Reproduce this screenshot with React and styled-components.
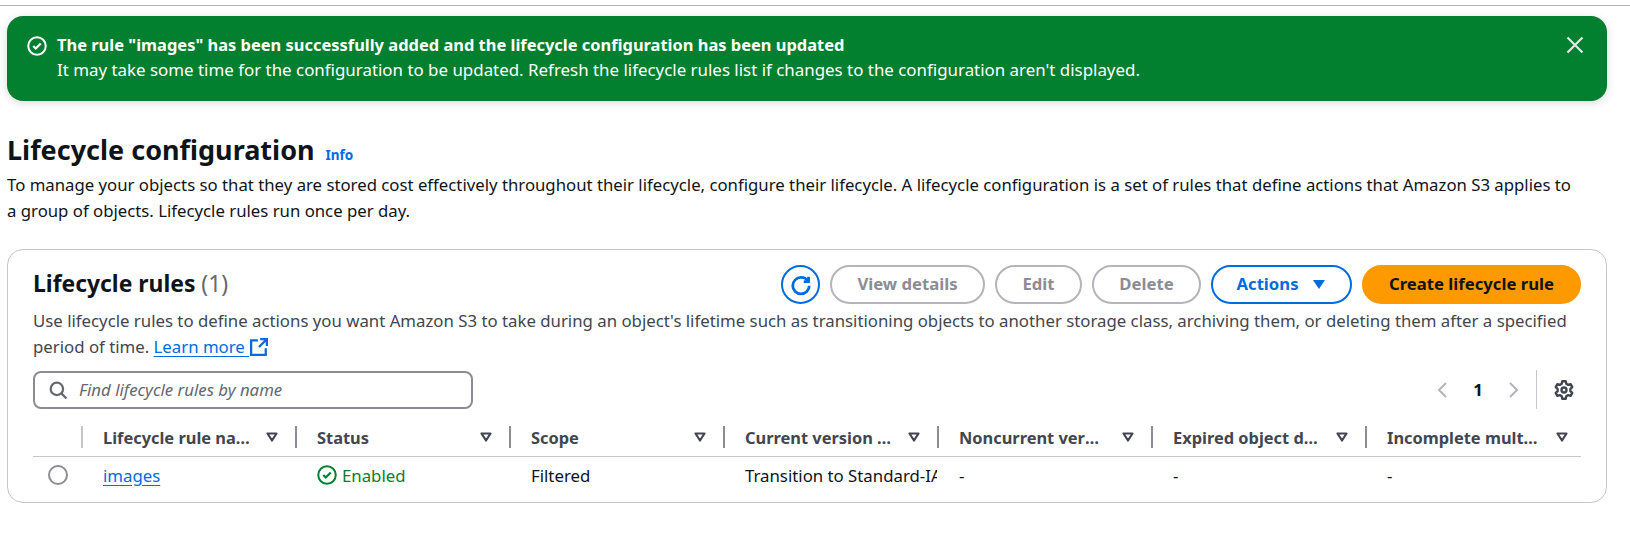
import styled, { createGlobalStyle } from "styled-components";

const GlobalStyle = createGlobalStyle`
  html, body {
    margin: 0;
    background: #fff;
    font-family: "Noto Sans", "Open Sans", sans-serif;
    color: #0f141a;
    font-size: 16.8px;
  }
`;

const columns = [
  "Lifecycle rule name",
  "Status",
  "Scope",
  "Current version actions",
  "Noncurrent versions actions",
  "Expired object delete markers",
  "Incomplete multipart uploads",
];

const Page = styled.div`
  width: 1630px;
  height: 540px;
  padding-top: 5px;
  box-sizing: border-box;
  overflow: hidden;
`;

const TopRule = styled.div`
  height: 1px;
  background: #b4b4bb;
`;

const Content = styled.main`
  padding: 10px 23px 0 7px;
`;

const Flash = styled.div`
  height: 85px;
  box-sizing: border-box;
  background: #037f30;
  color: #fff;
  border-radius: 16px;
  box-shadow: 0 2px 8px rgba(0, 7, 22, 0.15);
  display: flex;
  padding: 16px 22px 0 20px;
`;

const FlashIcon = styled.svg`
  width: 20px;
  height: 20px;
  margin: 4px 10px 0 0;
  flex: none;
`;

const FlashBody = styled.div`
  flex: 1;
  line-height: 25px;
  font-size: 16.9px;
`;

const FlashTitle = styled.div`
  font-weight: 700;
  font-size: 16.45px;
`;

const CloseIcon = styled.svg`
  width: 20px;
  height: 20px;
  margin-top: 3px;
  flex: none;
`;

const HeadingRow = styled.div`
  display: flex;
  align-items: center;
  margin-top: 30px;
`;

const Heading = styled.h1`
  margin: 0;
  font-size: 27px;
  line-height: 38px;
  font-weight: 700;
`;

const InfoLink = styled.a`
  margin: 10px 0 0 11px;
  font-size: 13.5px;
  font-weight: 700;
  color: #006ce0;
`;

const Intro = styled.p`
  margin: 3px 0 0;
  line-height: 26px;
  max-width: 1572px;
  font-size: 16.75px;
`;

const Card = styled.section`
  margin-top: 25px;
  height: 254px;
  box-sizing: border-box;
  border: 1px solid #c6c6cd;
  border-radius: 16px;
  padding: 15px 25px 0;
`;

const CardHeader = styled.div`
  display: flex;
  align-items: center;
  justify-content: space-between;
`;

const CardTitle = styled.h2`
  margin: 0;
  font-size: 22.9px;
  font-weight: 700;
  line-height: 37px;
  padding-bottom: 2px;
`;

const Count = styled.span`
  font-weight: 400;
  color: #656871;
`;

const Actions = styled.div`
  display: flex;
  gap: 10px;
  align-items: center;
`;

const IconButton = styled.button`
  width: 39px;
  height: 39px;
  padding: 0;
  border: 2px solid #006ce0;
  border-radius: 50%;
  background: #fff;
  color: #006ce0;
  display: flex;
  align-items: center;
  justify-content: center;
`;

const Button = styled.button`
  height: 39px;
  width: ${(p) => p.$width}px;
  box-sizing: border-box;
  border-radius: 20px;
  border: 2px solid ${(p) => (p.$tone === "primary" ? "#ff9900" : p.$tone === "normal" ? "#006ce0" : "#b4b4bb")};
  background: ${(p) => (p.$tone === "primary" ? "#ff9900" : "#fff")};
  color: ${(p) => (p.$tone === "primary" ? "#0f141a" : p.$tone === "normal" ? "#006ce0" : "#8c8c94")};
  font: 700 16.7px "Noto Sans", sans-serif;
  padding: 0 0 2px;
  display: flex;
  align-items: center;
  justify-content: center;
  gap: 12px;
`;

const Description = styled.p`
  margin: 4px 0 0;
  line-height: 26px;
  color: #424650;
`;

const TextLink = styled.a`
  color: #006ce0;
  text-decoration: underline;
  text-underline-offset: 3px;
`;

const ExternalIcon = styled.svg`
  width: 18px;
  height: 18px;
  margin-left: 1px;
  vertical-align: -3px;
`;

const Toolbar = styled.div`
  display: flex;
  align-items: center;
  justify-content: space-between;
  margin-top: 10px;
`;

const Search = styled.div`
  width: 440px;
  height: 38px;
  box-sizing: border-box;
  border: 2px solid #8c8c94;
  border-radius: 8px;
  display: flex;
  align-items: center;
  padding-left: 14px;
  gap: 12px;
  color: #656871;
  font-style: italic;
`;

const Pager = styled.div`
  display: flex;
  align-items: center;
  height: 39px;
  padding-right: 7px;
`;

const PageNumber = styled.span`
  font-weight: 700;
  width: 54px;
  text-align: center;
`;

const PagerDivider = styled.div`
  width: 1px;
  height: 39px;
  background: #c6c6cd;
  margin: 0 17px 0 15px;
`;

const Table = styled.div`
  margin-top: 10px;
`;

const HeaderRow = styled.div`
  display: grid;
  grid-template-columns: 48px repeat(7, 214px);
  height: 38px;
  border-bottom: 1px solid #c6c6cd;
  box-sizing: border-box;
  align-items: start;
  padding-top: 7px;
`;

const HeaderCell = styled.div`
  display: flex;
  align-items: center;
  height: 22px;
  padding: 0 ${(p) => (p.$last ? 9 : 15)}px 0 20px;
  color: #424650;
  font-weight: 700;
  font-size: 16.4px;
  border-left: 2px solid ${(p) => (p.$first ? "#c6c6cd" : "#8c8c94")};
  box-sizing: border-box;
  grid-column: ${(p) => (p.$first ? 2 : "auto")};
`;

const HeaderLabel = styled.span`
  flex: 1;
  overflow: hidden;
  white-space: nowrap;
  text-overflow: ellipsis;
`;

const SortIcon = styled.svg`
  width: 16px;
  height: 16px;
  flex: none;
  margin-left: 14px;
`;

const Row = styled.div`
  display: grid;
  grid-template-columns: 48px repeat(7, 214px);
  height: 36px;
  align-items: center;
`;

const Radio = styled.span`
  width: 20px;
  height: 20px;
  box-sizing: border-box;
  border: 2px solid #8c8c94;
  border-radius: 50%;
  justify-self: center;
  margin-left: 2px;
`;

const Cell = styled.div`
  padding-left: 22px;
  white-space: nowrap;
  overflow: hidden;
`;

const StatusCell = styled(Cell)`
  display: flex;
  align-items: center;
  gap: 5px;
  color: #037f30;
`;

const StatusIcon = styled.svg`
  width: 20px;
  height: 20px;
`;

const CheckCircle = ({ as: Icon, color }) => (
  <Icon viewBox="0 0 16 16" fill="none" stroke={color} strokeWidth="1.6">
    <circle cx="8" cy="8" r="7" />
    <path d="M5 8l2 2 4-4" strokeWidth="1.8" />
  </Icon>
);

const Sort = () => (
  <SortIcon viewBox="0 0 16 16" fill="none" stroke="#424650" strokeWidth="2.2" strokeLinejoin="round">
    <path d="M3.5 4.500h9L8 11.500z" />
  </SortIcon>
);

export default function App() {
  return (
    <Page>
      <GlobalStyle />
      <TopRule />
      <Content>
        <Flash>
          <CheckCircle as={FlashIcon} color="#fff" />
          <FlashBody>
            <FlashTitle>The rule "images" has been successfully added and the lifecycle configuration has been updated</FlashTitle>
            <div>It may take some time for the configuration to be updated. Refresh the lifecycle rules list if changes to the configuration aren't displayed.</div>
          </FlashBody>
          <CloseIcon viewBox="0 0 16 16" fill="none" stroke="#e4e8e6" strokeWidth="1.7">
            <path d="M2 2l12 12M14 2L2 14" />
          </CloseIcon>
        </Flash>
        <HeadingRow>
          <Heading>Lifecycle configuration</Heading>
          <InfoLink>Info</InfoLink>
        </HeadingRow>
        <Intro>
          To manage your objects so that they are stored cost effectively throughout their lifecycle, configure their lifecycle. A lifecycle configuration is a set of rules that define actions that Amazon S3 applies to a group of objects. Lifecycle rules run once per day.
        </Intro>
        <Card>
          <CardHeader>
            <CardTitle>Lifecycle rules <Count>(1)</Count></CardTitle>
            <Actions>
              <IconButton>
                <svg width="22" height="22" viewBox="0 0 16 16" fill="none" stroke="currentColor" strokeWidth="2">
                  <path d="M10 5.500h3.500V2" />
                  <path d="M14 8.500c0 3.300-2.700 6-6 6s-6-2.700-6-6 2.700-6 6-6c2.300 0 4.300 1.200 5.300 3" />
                </svg>
              </IconButton>
              <Button $width={155}>View details</Button>
              <Button $width={87}>Edit</Button>
              <Button $width={109}>Delete</Button>
              <Button $width={141} $tone="normal">
                Actions
                <svg width="16" height="16" viewBox="0 0 16 16" fill="currentColor"><path d="M2 4h12L8 13z" /></svg>
              </Button>
              <Button $width={219} $tone="primary">Create lifecycle rule</Button>
            </Actions>
          </CardHeader>
          <Description>
            Use lifecycle rules to define actions you want Amazon S3 to take during an object's lifetime such as transitioning objects to another storage class, archiving them, or deleting them after a specified period of time. <TextLink>Learn more&nbsp;</TextLink>
            <ExternalIcon viewBox="0 0 16 16" fill="none" stroke="#006ce0" strokeWidth="2">
              <path d="M14 9v6H1V2h6" />
              <path d="M9 1h6v6M15 1L8 8" />
            </ExternalIcon>
          </Description>
          <Toolbar>
            <Search>
              <svg width="18" height="18" viewBox="0 0 16 16" fill="none" stroke="#656871" strokeWidth="2">
                <circle cx="7" cy="7" r="5.500" />
                <path d="M11 11l4.500 4.500" />
              </svg>
              Find lifecycle rules by name
            </Search>
            <Pager>
              <svg width="16" height="18" viewBox="0 0 16 18" fill="none" stroke="#b4b4bb" strokeWidth="2"><path d="M11 2L4 9l7 7" /></svg>
              <PageNumber>1</PageNumber>
              <svg width="16" height="18" viewBox="0 0 16 18" fill="none" stroke="#b4b4bb" strokeWidth="2"><path d="M5 2l7 7-7 7" /></svg>
              <PagerDivider />
              <svg width="20" height="20" viewBox="0 0 16 16" fill="none" stroke="#424650" strokeWidth="1.900" strokeLinejoin="round">
                <path d="M6.600 1h2.800l.4 2 1.500.9 2-.6 1.300 2.400-1.500 1.400v1.800l1.500 1.400-1.300 2.400-2-.6-1.500.9-.4 2H6.600l-.4-2-1.500-.9-2 .6-1.300-2.400 1.500-1.400V7.100L1.400 5.700l1.300-2.400 2 .6 1.500-.9z" />
                <circle cx="8" cy="8" r="2" />
              </svg>
            </Pager>
          </Toolbar>
          <Table>
            <HeaderRow>
              {columns.map((name, i) => (
                <HeaderCell key={name} $first={i === 0} $last={i === columns.length - 1}>
                  <HeaderLabel>{name}</HeaderLabel>
                  <Sort />
                </HeaderCell>
              ))}
            </HeaderRow>
            <Row>
              <Radio />
              <Cell><TextLink>images</TextLink></Cell>
              <StatusCell>
                <CheckCircle as={StatusIcon} color="#037f30" />
                Enabled
              </StatusCell>
              <Cell>Filtered</Cell>
              <Cell>Transition to Standard-IA</Cell>
              <Cell>-</Cell>
              <Cell>-</Cell>
              <Cell>-</Cell>
            </Row>
          </Table>
        </Card>
      </Content>
    </Page>
  );
}
